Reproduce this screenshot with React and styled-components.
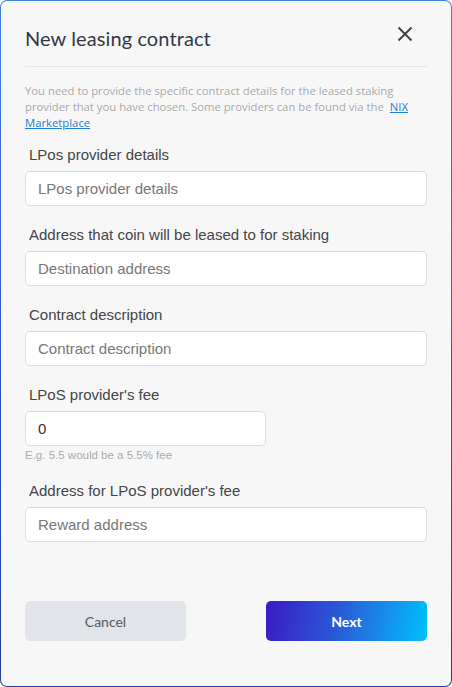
import React from "react";
import styled, { createGlobalStyle } from "styled-components";

const GlobalStyle = createGlobalStyle`
  html, body {
    margin: 0;
    padding: 0;
    background: #ffffff;
  }
  * { box-sizing: border-box; }
`;

const Frame = styled.div`
  width: 452px;
  height: 687px;
  padding: 1px;
  border-radius: 7px;
  background: linear-gradient(180deg, #3f83dc 0%, #2a55b8 60%, #20409f 100%);
`;

const Modal = styled.div`
  height: 100%;
  border-radius: 6px;
  background: #f7f7f8;
  display: flex;
  flex-direction: column;
  padding: 0 24px;
`;

const Header = styled.div`
  display: flex;
  align-items: center;
  justify-content: space-between;
  height: 66px;
  border-bottom: 1px solid #e6e6e8;
  padding-top: 9px;
`;

const Title = styled.h1`
  margin: 0;
  font-family: Lato, "Noto Sans", sans-serif;
  font-weight: 400;
  font-size: 20px;
  color: #333845;
  letter-spacing: 0.1px;
`;

const Close = styled.button`
  border: 0;
  background: none;
  padding: 0;
  width: 20px;
  height: 20px;
  margin-right: 12px;
  margin-top: -9px;
  display: flex;
  align-items: center;
  justify-content: center;
  cursor: pointer;
`;

const Intro = styled.p`
  margin: 16px 0 0;
  font-family: "Open Sans", Arial, sans-serif;
  font-size: 11.3px;
  line-height: 16px;
  color: #aaaaaa;
`;

const Link = styled.a`
  color: #1a7fd8;
  text-decoration: underline;
  margin-left: 6px;
`;

const Form = styled.div`
  display: flex;
  flex-direction: column;
  margin-top: 16px;
`;

const Field = styled.div`
  display: flex;
  flex-direction: column;
  margin-bottom: 21px;
`;

const Label = styled.label`
  font-family: "Liberation Sans", Arial, sans-serif;
  font-size: 15px;
  color: #454545;
  padding-left: 4px;
  margin-bottom: 8px;
  line-height: 16px;
`;

const Input = styled.input`
  width: ${(p) => p.$width || "100%"};
  height: 35px;
  border: 1px solid #dcdcdc;
  border-radius: 5px;
  background: #fff;
  padding: 0 12px;
  font-family: "Liberation Sans", Arial, sans-serif;
  font-size: 15px;
  color: #333;
  outline: none;
  &::placeholder {
    color: #777;
  }
`;

const Hint = styled.span`
  font-family: "Liberation Sans", Arial, sans-serif;
  font-size: 11.5px;
  color: #aaa;
  margin-top: 2px;
  line-height: 14px;
`;

const Footer = styled.div`
  display: flex;
  justify-content: space-between;
  margin-top: auto;
  margin-bottom: 45px;
`;

const Button = styled.button`
  width: 161px;
  height: 40px;
  border: 0;
  border-radius: 5px;
  font-family: Lato, "Noto Sans", sans-serif;
  font-size: 14px;
  font-weight: ${(p) => (p.$primary ? 700 : 400)};
  color: ${(p) => (p.$primary ? "#ffffff" : "#555a60")};
  background: ${(p) =>
    p.$primary
      ? "linear-gradient(100deg, #3a1bc4 0%, #2a5ad8 45%, #00c1fb 100%)"
      : "#e1e4e8"};
  cursor: pointer;
`;

export default function App() {
  return (
    <>
      <GlobalStyle />
      <Frame>
        <Modal>
          <Header>
            <Title>New leasing contract</Title>
            <Close aria-label="Close">
              <svg width="16" height="16" viewBox="0 0 16 16">
                <path d="M1.5 1.5 L14.5 14.5 M14.5 1.5 L1.5 14.5" stroke="#444" strokeWidth="2" strokeLinecap="butt" />
              </svg>
            </Close>
          </Header>
          <Intro>
            You need to provide the specific contract details for the leased staking provider that you have chosen. Some providers can be found via the
            <Link href="#">NIX Marketplace</Link>
          </Intro>
          <Form>
            <Field>
              <Label>LPos provider details</Label>
              <Input placeholder="LPos provider details" />
            </Field>
            <Field>
              <Label>Address that coin will be leased to for staking</Label>
              <Input placeholder="Destination address" />
            </Field>
            <Field>
              <Label>Contract description</Label>
              <Input placeholder="Contract description" />
            </Field>
            <Field>
              <Label>LPoS provider's fee</Label>
              <Input $width="241px" defaultValue="0" />
              <Hint>E.g. 5.5 would be a 5.5% fee</Hint>
            </Field>
            <Field>
              <Label>Address for LPoS provider's fee</Label>
              <Input placeholder="Reward address" />
            </Field>
          </Form>
          <Footer>
            <Button>Cancel</Button>
            <Button $primary>Next</Button>
          </Footer>
        </Modal>
      </Frame>
    </>
  );
}
